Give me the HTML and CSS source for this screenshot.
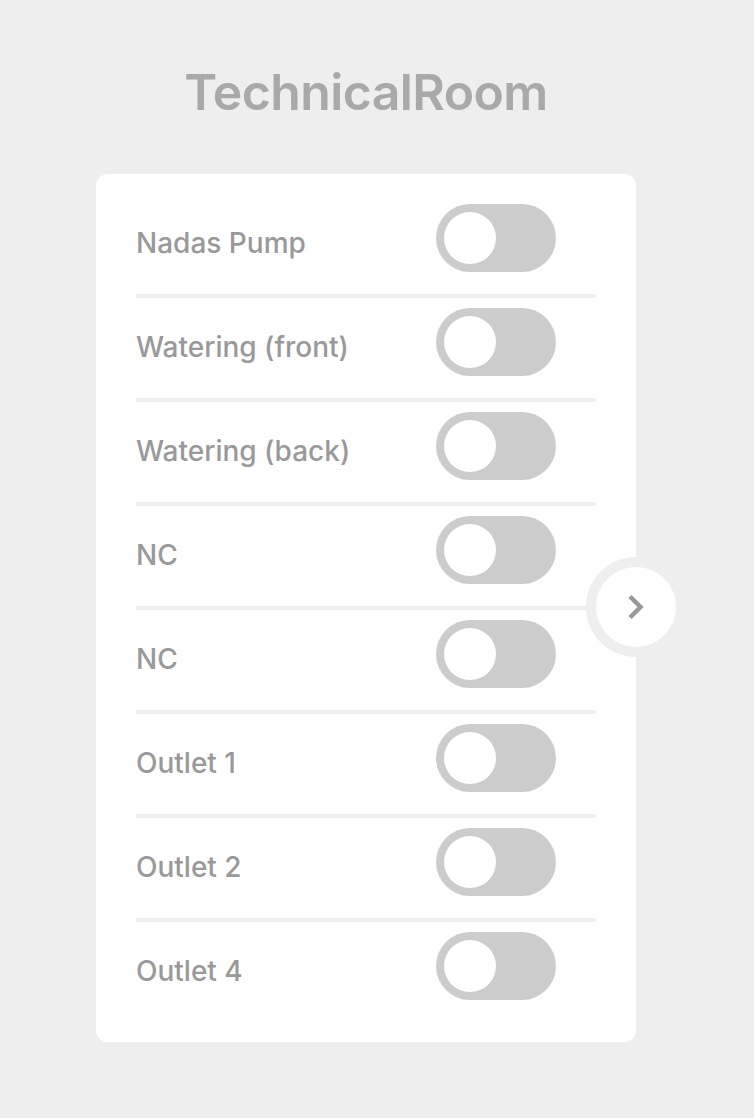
FILE: index.html
```html
<!DOCTYPE html>
<html>
<head>
<meta charset="utf-8">
<link rel="stylesheet" href="styles.css">
</head>
<body>
<main class="page">
  <h1 class="title">TechnicalRoom</h1>
  <section class="card">
    <div class="row"><span class="label">Nadas Pump</span><span class="toggle"><span class="knob"></span></span></div>
    <div class="row"><span class="label">Watering (front)</span><span class="toggle"><span class="knob"></span></span></div>
    <div class="row"><span class="label">Watering (back)</span><span class="toggle"><span class="knob"></span></span></div>
    <div class="row"><span class="label">NC</span><span class="toggle"><span class="knob"></span></span></div>
    <div class="row"><span class="label">NC</span><span class="toggle"><span class="knob"></span></span></div>
    <div class="row"><span class="label">Outlet 1</span><span class="toggle"><span class="knob"></span></span></div>
    <div class="row"><span class="label">Outlet 2</span><span class="toggle"><span class="knob"></span></span></div>
    <div class="row"><span class="label">Outlet 4</span><span class="toggle"><span class="knob"></span></span></div>
    <button class="next" aria-label="next">
      <svg width="20" height="26" viewBox="0 0 20 26"><path d="M4 2.5 L14.5 13 L4 23.5" fill="none" stroke="#999" stroke-width="4.5"/></svg>
    </button>
  </section>
</main>
</body>
</html>
```

FILE: styles.css
```css
html, body {
  margin: 0;
  padding: 0;
  background: #eeeeee;
}
body {
  font-family: Inter, "Noto Sans", sans-serif;
}
.page {
  width: 540px;
  margin-left: 96px;
  padding-top: 60px;
  padding-bottom: 76px;
}
.title {
  margin: 0 0 50px 0;
  height: 64px;
  line-height: 64px;
  text-align: center;
  font-size: 50px;
  font-weight: 600;
  color: #a9a9a9;
  letter-spacing: -0.6px;
}
.card {
  position: relative;
  background: #ffffff;
  border-radius: 12px;
  padding: 20px 40px;
}
.row {
  display: flex;
  align-items: center;
  justify-content: space-between;
  padding: 10px 40px 22px 0;
  border-bottom: 4px solid #eeeeee;
}
.row:last-of-type {
  border-bottom: none;
}
.label {
  font-size: 28px;
  font-weight: 500;
  color: #999999;
  padding-top: 10px;
}
.toggle {
  display: flex;
  align-items: center;
  width: 120px;
  height: 68px;
  padding: 0 8px;
  box-sizing: border-box;
  border-radius: 34px;
  background: #cccccc;
}
.knob {
  width: 52px;
  height: 52px;
  border-radius: 50%;
  background: #ffffff;
}
.next {
  position: absolute;
  right: -50px;
  top: 383px;
  width: 100px;
  height: 100px;
  box-sizing: border-box;
  border-radius: 50%;
  border: 10px solid #eeeeee;
  background: #ffffff;
  padding: 0;
  display: flex;
  align-items: center;
  justify-content: center;
}
.next svg {
  display: block;
}
```
